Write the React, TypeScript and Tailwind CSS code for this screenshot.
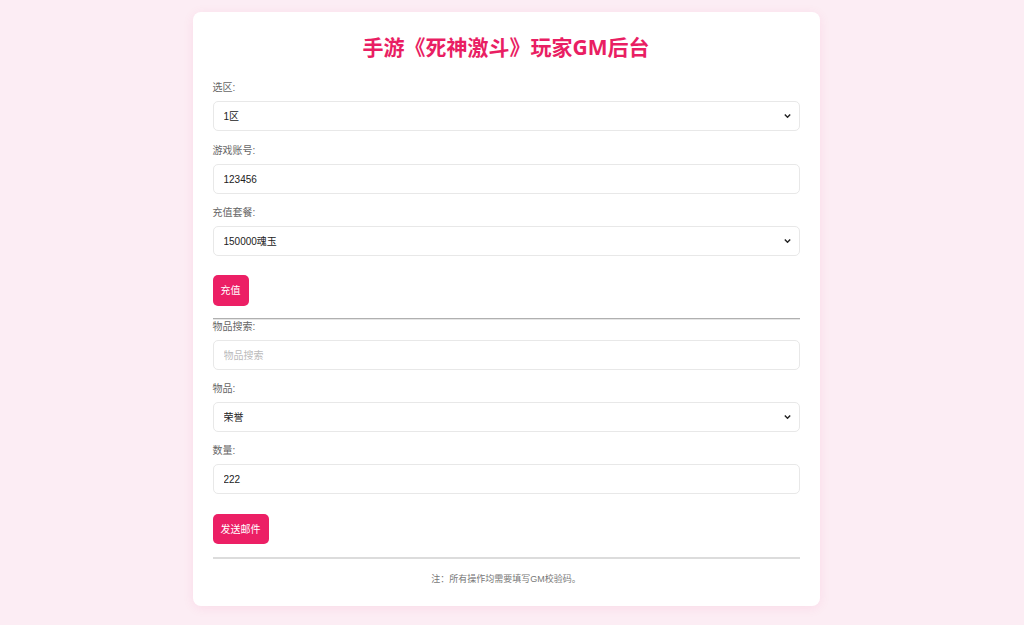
import { useState } from "react";

const font = { fontFamily: '"Liberation Sans", "Noto Sans CJK SC", sans-serif' };

const Label = ({ text }: { text: string }) => (
  <label className="block text-[10px] leading-[14px] text-[#666] mb-[6px]">{text}</label>
);

const fieldCls =
  "block w-full h-[30px] px-[10px] text-[10px] text-[#222] bg-white border border-[#e8e8e8] rounded-[5px] outline-none";

const Chevron = () => (
  <svg
    className="absolute right-[9px] top-1/2 -translate-y-1/2 pointer-events-none"
    width="7"
    height="5"
    viewBox="0 0 7 5"
  >
    <path d="M0.8 1 L3.5 3.8 L6.2 1" fill="none" stroke="#222" strokeWidth="1.4" />
  </svg>
);

const Select = ({
  value,
  onChange,
  options,
}: {
  value: string;
  onChange: (v: string) => void;
  options: [string, string][];
}) => (
  <div className="relative">
    <select className={`${fieldCls} appearance-none`} value={value} onChange={(e) => onChange(e.target.value)}>
      {options.map(([v, t]) => (
        <option key={v} value={v}>
          {t}
        </option>
      ))}
    </select>
    <Chevron />
  </div>
);

const App = () => {
  const [zone, setZone] = useState("1");
  const [account, setAccount] = useState("123456");
  const [pack, setPack] = useState("150000");
  const [search, setSearch] = useState("");
  const [item, setItem] = useState("honor");
  const [count, setCount] = useState("222");

  return (
    <main className="min-h-screen bg-[#fcedf4] pt-[12px] pb-[19px] flex justify-center pr-[12px]" style={font}>
      <div className="w-[627px] bg-white rounded-[8px] shadow-[0_2px_12px_rgba(233,30,99,0.08)] px-[20px] pt-[21px] pb-[20px] self-start">
        <h1
          className="text-center text-[21px] leading-[28px] font-bold text-[#e91e63] mb-[20px]"
          style={{ fontFamily: '"Noto Sans", "Noto Sans CJK SC", sans-serif' }}
        >
          手游《死神激斗》玩家GM后台
        </h1>

        <div className="mb-[13px]">
          <Label text="选区:" />
          <Select
            value={zone}
            onChange={setZone}
            options={[
              ["1", "1区"],
              ["2", "2区"],
            ]}
          />
        </div>

        <div className="mb-[12px]">
          <Label text="游戏账号:" />
          <input className={fieldCls} value={account} onChange={(e) => setAccount(e.target.value)} />
        </div>

        <div className="mb-[19px]">
          <Label text="充值套餐:" />
          <Select
            value={pack}
            onChange={setPack}
            options={[
              ["150000", "150000魂玉"],
              ["50000", "50000魂玉"],
            ]}
          />
        </div>

        <button className="h-[31px] px-[8px] text-[10px] text-white bg-[#ec1f65] rounded-[5px]">充值</button>

        <hr className="mt-[12px] mb-0 border-0 border-t border-t-[#b0b0b0] border-b border-b-[#e6e6e6]" />

        <div className="mb-[12px]">
          <Label text="物品搜索:" />
          <input
            className={`${fieldCls} placeholder:text-[#bbb]`}
            placeholder="物品搜索"
            value={search}
            onChange={(e) => setSearch(e.target.value)}
          />
        </div>

        <div className="mb-[12px]">
          <Label text="物品:" />
          <Select
            value={item}
            onChange={setItem}
            options={[
              ["honor", "荣誉"],
              ["gold", "金币"],
            ]}
          />
        </div>

        <div className="mb-[20px]">
          <Label text="数量:" />
          <input className={fieldCls} value={count} onChange={(e) => setCount(e.target.value)} />
        </div>

        <button className="h-[30px] px-[8px] text-[10px] text-white bg-[#ec1f65] rounded-[5px]">发送邮件</button>

        <hr className="mt-[13px] border-0 border-t-2 border-t-[#dcdcdc]" />

        <p className="mt-[13px] text-center text-[9px] leading-[14px] text-[#777]">
          注：所有操作均需要填写GM校验码。
        </p>
      </div>
    </main>
  );
};

export default App;
